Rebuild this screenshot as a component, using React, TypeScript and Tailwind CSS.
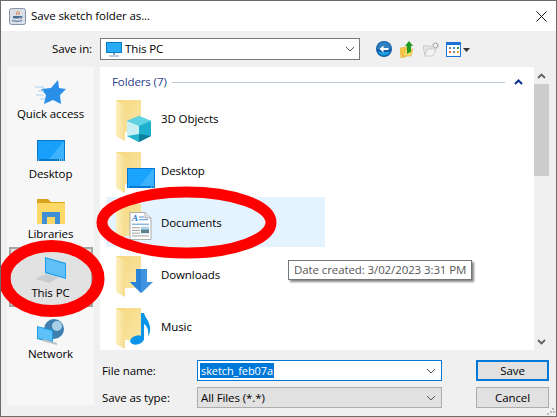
import React from "react";

const Chevron = ({ className = "" }: { className?: string }) => (
  <svg width="10" height="6" viewBox="0 0 10 6" className={className}>
    <path d="M1 1l4 4 4-4" fill="none" stroke="#555" strokeWidth="1" />
  </svg>
);

const Folder = ({ children }: { children?: React.ReactNode }) => (
  <svg width="44" height="44" viewBox="0 0 44 44" className="shrink-0 mt-[6px]">
    <defs>
      <linearGradient id="fb" x1="0" x2="1" y1="0" y2="1">
        <stop offset="0" stopColor="#f5d77e" />
        <stop offset="1" stopColor="#f9e6a6" />
      </linearGradient>
      <linearGradient id="ff" x1="0" x2="1">
        <stop offset="0" stopColor="#fdf0bf" />
        <stop offset="1" stopColor="#f6dc8e" />
      </linearGradient>
    </defs>
    <path d="M0 1h25v32H0z" fill="url(#fb)" />
    <path d="M0 1l9 5v36l-9-5z" fill="url(#ff)" />
    {children}
  </svg>
);

const Monitor = () => (
  <g>
    <rect x="11" y="17" width="28" height="20" fill="#0078d4" />
    <path d="M12 18h26v17H12z" fill="#1aa3ff" />
    <path d="M24 35l13-17h1v17z" fill="#3eb1fb" />
    <path d="M12 36h26" stroke="#e8f4ff" strokeWidth="0.7" strokeDasharray="1 22 1 1 1" />
  </g>
);

const rows = [
  {
    name: "3D Objects",
    art: (
      <Folder>
        <g transform="translate(0 3)">
          <path d="M11 19l12-5 12 5v15l-12 6-12-6z" fill="#1db1cf" />
          <path d="M11 19l12-5 12 5-12 5z" fill="#5fd3e4" />
          <path d="M11 19l12 5v15l-12-5z" fill="#c9f1f5" />
          <path d="M23 32l12 2-12 6z" fill="#0c7f9c" />
          <path d="M23 32l-12 2 12 6z" fill="#22b6cc" />
        </g>
      </Folder>
    ),
  },
  { name: "Desktop", art: <Folder><Monitor /></Folder> },
  {
    name: "Documents",
    art: (
      <Folder>
        <g transform="translate(1 5) scale(1 0.9)">
          <path d="M13 5h15l6 6v24H13z" fill="#fff" stroke="#a9a9a9" />
          <path d="M28 5v6h6" fill="#e6e6e6" stroke="#a9a9a9" />
          <text x="15" y="15" fontSize="9" fontStyle="italic" fontWeight="700" fill="#1f77c9" fontFamily="Liberation Serif, serif">A</text>
          <path d="M22 10h5M22 13h9M15 18h17" stroke="#4a8fd0" strokeWidth="1" />
          <path d="M15 22h8M15 25h8M15 28h8M15 31h17" stroke="#9a9a9a" strokeWidth="1" />
          <rect x="24" y="21" width="8" height="7" fill="#5c7f8c" />
          <path d="M24 21h8v3h-8z" fill="#a9d4ea" />
        </g>
      </Folder>
    ),
  },
  {
    name: "Downloads",
    art: (
      <Folder>
        <path d="M20 14h11v13h6L25.500 38 14 27h6z" fill="#3f93e0" />
        <path d="M20 14h5v24L14 27h6z" fill="#2a83d8" />
      </Folder>
    ),
  },
  {
    name: "Music",
    art: (
      <Folder>
        <ellipse cx="21" cy="33" rx="7" ry="4.500" transform="rotate(-15 21 33)" fill="#0a95ea" />
        <path d="M25 33V6h3c1 5 7 9 6 18-.5 3-1 4-2 5 1-6-1-10-4-12v16z" fill="#0a95ea" />
      </Folder>
    ),
  },
];

export default function App() {
  return (
    <div className="relative w-[557px] h-[417px] overflow-hidden bg-[#f0f0f0] border border-[#6b6b6b] font-['Open_Sans','Noto_Sans',sans-serif] text-[11.5px] tracking-[-0.1px] text-black">
      <div className="h-[30px] bg-white flex items-center pl-[8px] pr-[9px]">
        <svg width="17" height="17" viewBox="0 0 17 17">
          <rect x="0.500" y="0.500" width="16" height="16" rx="2" fill="#d9dfe6" stroke="#8696a8" />
          <path d="M8 3c2 1-2 2 0 4M10 4c1 1-1 2 0 3" stroke="#e0662a" fill="none" />
          <path d="M4 8h7v1c0 1-1 1.500-2 1.500H6c-1 0-2-.5-2-1.500z" fill="#4a6f95" />
          <path d="M3 12.500c3 1 7 1 10 0M11 8.500h2v1.500h-2" stroke="#4a6f95" fill="none" />
        </svg>
        <span className="ml-[5px]">Save sketch folder as...</span>
        <svg width="11" height="11" viewBox="0 0 11 11" className="ml-auto">
          <path d="M0.500 0.500l10 10M10.500 0.500l-10 10" stroke="#111" strokeWidth="1" />
        </svg>
      </div>

      <div className="h-[36px] flex items-center">
        <span className="w-[91px] text-right">Save in:</span>
        <div className="ml-[8px] w-[260px] h-[22px] bg-white border border-[#7a7a7a] flex items-center pl-[5px] pr-[4px]">
          <svg width="16" height="15" viewBox="0 0 16 15">
            <rect x="0" y="0" width="16" height="11" fill="#0a7cc4" />
            <rect x="1" y="1" width="14" height="9" fill="#29abf5" />
            <path d="M3 14h10" stroke="#a8bdcc" strokeWidth="1.500" />
            <path d="M7 11h2v2H7z" fill="#7aa6c4" />
          </svg>
          <span className="ml-[3px]">This PC</span>
          <Chevron className="ml-auto" />
        </div>
        <div className="ml-[16px] flex items-center">
          <svg width="16" height="16" viewBox="0 0 16 16">
            <circle cx="8" cy="8" r="8" fill="#0f5fa8" />
            <path d="M1 8a7 7 0 0 1 14 0z" fill="#2f7fc0" />
            <path d="M2 11a7 7 0 0 0 12 0z" fill="#1aa0dc" />
            <path d="M3.500 8L7.500 4.500V7h5v2h-5v2.500z" fill="#fff" />
          </svg>
          <svg width="14" height="17" viewBox="0 0 14 17" className="ml-[8px]">
            <path d="M0 7l7-1v9l-6 2z" fill="#f7c84a" stroke="#d9a021" strokeWidth="0.500" />
            <path d="M5 8h8l-2 7H3z" fill="#fbd968" stroke="#d9a021" strokeWidth="0.500" />
            <path d="M9 0l4 5h-2v6c-1 0-3 1-4 2V5H5z" fill="#1f9a1f" />
          </svg>
          <svg width="16" height="15" viewBox="0 0 16 15" className="ml-[9px]">
            <path d="M0 4h8v9H2z" fill="#e9e9e9" stroke="#b9b9b9" strokeWidth="0.700" />
            <path d="M2 14L4 7h9l-3 7z" fill="#f3f3f3" stroke="#b9b9b9" strokeWidth="0.700" />
            <circle cx="12.500" cy="3.500" r="2.500" fill="none" stroke="#8f8f8f" strokeWidth="1.200" strokeDasharray="1.300 0.700" />
          </svg>
          <svg width="25" height="15" viewBox="0 0 25 15" className="ml-[7px]">
            <rect x="0.500" y="0.500" width="14" height="14" fill="#fff" stroke="#1a73d9" />
            <rect x="0" y="0" width="15" height="3" fill="#1a73d9" />
            <path d="M3 5h2v2H3z" fill="#7d8ca3" />
            <path d="M7 5h2v2H7z" fill="#3b8fd8" />
            <path d="M11 5h2v2h-2z" fill="#2a9a4a" />
            <path d="M3 9h2v2H3z" fill="#e86a2a" />
            <path d="M7 9h2v2H7z" fill="#7d8ca3" />
            <path d="M11 9h2v2h-2z" fill="#e8a52a" />
            <path d="M17 6h7l-3.500 4z" fill="#333" />
          </svg>
        </div>
      </div>

      <div className="flex h-[283px] pl-[6px]">
        <div className="w-[87px] bg-[#f7f7f7] relative z-0 h-[338px] shrink-0 flex flex-col items-center">
          <div className="h-[60px] w-full flex flex-col items-center justify-end pb-[5px]">
            <svg width="32" height="25" viewBox="0 0 32 25">
              <path d="M23 0L24 8L31 9L25 15L26 24L18 20L9 24L11 15L6 9L16 8Z" fill="#2a8fe8" />
              <path d="M0 7h9M3 11h6M1 15h8M5 19h5" stroke="#a8d4f5" strokeWidth="1" />
            </svg>
            <span>Quick access</span>
          </div>
          <div className="h-[60px] w-full flex flex-col items-center justify-end pb-[5px]">
            <svg width="28" height="21" viewBox="0 0 28 21">
              <rect width="28" height="21" fill="#0a78c4" />
              <rect x="1" y="1" width="26" height="18" fill="#17a0fb" />
              <path d="M12 19L26 2h1v17z" fill="#3db2fd" />
              <path d="M1 20h1M22 20h1M24 20h1M26 20h1" stroke="#e8f4ff" />
            </svg>
            <span className="mt-[4px]">Desktop</span>
          </div>
          <div className="h-[60px] w-full flex flex-col items-center justify-end pb-[5px]">
            <svg width="28" height="25" viewBox="0 0 28 25">
              <path d="M0 0h11l3 3h14v22H0z" fill="#d9a21f" />
              <path d="M0 4h28v21H0z" fill="#fcd866" />
              <path d="M5 25V13h18v12h-5v-7h-8v7z" fill="#3e8fd8" />
            </svg>
            <span className="mt-[1px]">Libraries</span>
          </div>
          <div className="h-[60px] w-[84px] flex flex-col items-center justify-end pb-[4px] bg-[#e2e2e2] border-2 border-[#a6a6a6]">
            <svg width="32" height="27" viewBox="0 0 32 27">
              <path d="M10 0L31 6V22L10 16z" fill="#1e9de8" />
              <path d="M11 1.500L30 7V20.500L11 15z" fill="#62c0f8" />
              <path d="M0 22L11 17L24 20L14 26z" fill="#c8cdd2" />
            </svg>
            <span>This PC</span>
          </div>
          <div className="h-[60px] w-full flex flex-col items-center justify-end pb-[5px]">
            <svg width="28" height="26" viewBox="0 0 28 26">
              <circle cx="17" cy="10" r="10" fill="#3f80b0" />
              <circle cx="20" cy="7" r="5" fill="#a9cfe6" />
              <path d="M0 7l16 4v13L0 20z" fill="#1e9de8" />
              <path d="M1 8l14 4v10L1 19z" fill="#5ec0f8" />
              <path d="M6 21l14 4" stroke="#b9c0c6" strokeWidth="2" />
            </svg>
            <span>Network</span>
          </div>
        </div>

        <div className="ml-[6px] w-[434px] bg-white pl-[6px] pr-[8px] relative">
          <div className="flex items-center h-[26px] pt-[4px] text-[#1f3d8a] pl-[6px]">
            <span>Folders (7)</span>
            <div className="flex-1 h-px bg-[#b9c6dc] ml-[5px]"></div>
            <svg width="9" height="6" viewBox="0 0 9 6" className="ml-[9px] mr-[3px]">
              <path d="M1 5l3.500-3.500L8 5" fill="none" stroke="#0a2f8c" strokeWidth="2" />
            </svg>
          </div>
          <div className="flex flex-col gap-[2px]">
            {rows.map((r) => (
              <div
                key={r.name}
                className={`h-[50px] flex items-center pl-[10px] w-[219px] ${r.name === "Documents" ? "bg-[#e5f3ff]" : ""}`}
              >
                {r.art}
                <span className="ml-[1px] pt-[2px]">{r.name}</span>
              </div>
            ))}
          </div>
        </div>

        <div className="w-[15px] bg-[#f0f0f0] flex flex-col items-center shrink-0">
          <div className="h-[17px] flex items-center">
            <svg width="9" height="6" viewBox="0 0 9 6"><path d="M1 5l3.500-3.500L8 5" fill="none" stroke="#606060" strokeWidth="1.800" /></svg>
          </div>
          <div className="w-full h-[92px] bg-[#cdcdcd]"></div>
          <div className="mt-auto h-[17px] flex items-center">
            <svg width="9" height="6" viewBox="0 0 9 6"><path d="M1 1l3.500 3.500L8 1" fill="none" stroke="#606060" strokeWidth="1.800" /></svg>
          </div>
        </div>
      </div>

      <div className="ml-[101px] mt-[10px] w-[447px] flex">
        <div className="w-[95px] flex flex-col gap-[6px]">
          <div className="h-[21px] flex items-center">File name:</div>
          <div className="h-[21px] flex items-center">Save as type:</div>
        </div>
        <div className="w-[245px] flex flex-col gap-[6px]">
          <div className="h-[21px] bg-white border border-[#0078d7] flex items-center pl-[2px] pr-[5px]">
            <span className="bg-[#0078d7] text-white text-[11px] leading-[15px] px-px">sketch_feb07a</span>
            <Chevron className="ml-auto" />
          </div>
          <div className="h-[21px] bg-[#e1e1e1] border border-[#adadad] flex items-center pl-[3px] pr-[5px]">
            <span>All Files (*.*)</span>
            <Chevron className="ml-auto" />
          </div>
        </div>
        <div className="ml-[34px] w-[73px] flex flex-col gap-[6px]">
          <div className="h-[21px] bg-[#e1e1e1] border-2 border-[#0078d7] flex items-center justify-center">Save</div>
          <div className="h-[21px] bg-[#e1e1e1] border border-[#adadad] flex items-center justify-center">Cancel</div>
        </div>
      </div>

      <svg width="8" height="8" viewBox="0 0 8 8" className="absolute right-[1px] bottom-[1px]">
        <path d="M5 1h2v2H5zM3 4h2v2H3zM6 4h2v2H6zM0 6h2v2H0z" fill="#b9b9b9" />
      </svg>

      <div className="absolute left-[287px] top-[259px] h-[20px] px-[5px] bg-white border border-[#767676] shadow-[2px_2px_2px_#888] flex items-center text-[#575757] whitespace-nowrap">
        Date created: 3/02/2023 3:31 PM
      </div>

      <svg width="557" height="417" viewBox="0 0 557 417" className="absolute -left-px -top-px pointer-events-none">
        <ellipse cx="186.500" cy="222.500" rx="84.500" ry="30.500" fill="none" stroke="#ff0000" strokeWidth="11" />
        <ellipse cx="51.500" cy="278.500" rx="47" ry="32.500" fill="none" stroke="#ff0000" strokeWidth="12" />
      </svg>
    </div>
  );
}
